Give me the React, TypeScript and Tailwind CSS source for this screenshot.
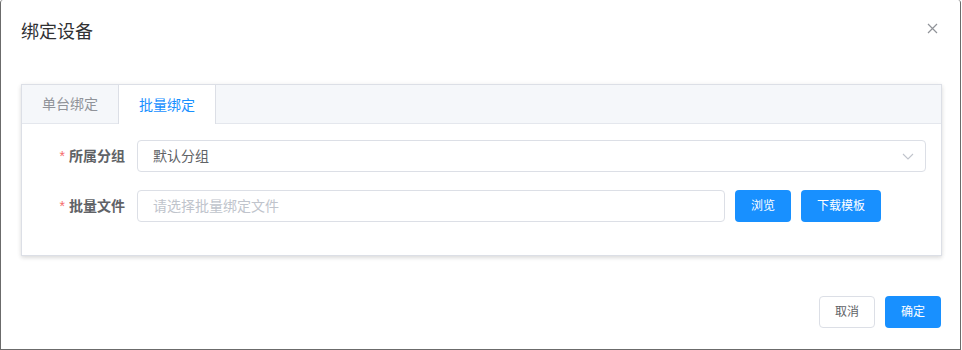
import { useState } from "react"

const FONT = "font-['Helvetica_Neue','Liberation_Sans','Noto_Sans_CJK_SC',sans-serif]"

const TABS = ["单台绑定", "批量绑定"]

export default function App() {
    const [tab, setTab] = useState(1)

    return (
        <div className={`relative w-[961px] h-[350px] bg-white border-x border-b border-[#6b6b6b] rounded-t-[3px] flex flex-col ${FONT}`}>
            {/* ── Header ─────────────────────── */}
            <div className="px-[20px] pt-[20px] pb-[10px]">
                <span className="block text-[18px] leading-[24px] text-[#303133]">绑定设备</span>
            </div>
            <button className="absolute top-[23px] right-[22px] text-[#909399]" aria-label="关闭">
                <svg width="11" height="11" viewBox="0 0 11 11" fill="none" stroke="currentColor" strokeWidth="1.2">
                    <path d="M1 1l9 9M10 1l-9 9" />
                </svg>
            </button>

            {/* ── Body ───────────────────────── */}
            <div className="px-[20px] pt-[30px] pb-[30px]">
                <div className="w-[921px] border border-[#dcdfe6] bg-white shadow-[0_2px_4px_rgba(0,0,0,0.12),0_0_6px_rgba(0,0,0,0.04)]">
                    {/* Tabs */}
                    <div className="flex h-[39px] bg-[#f5f7fa]">
                        {TABS.map((t, i) => (
                            <button
                                key={t}
                                onClick={() => setTab(i)}
                                className={`px-5 text-[14px] leading-[38px] ${
                                    tab === i
                                        ? "bg-white text-[#1890ff] border-x border-[#dcdfe6]"
                                        : "text-[#909399] border-b border-[#e4e7ed]"
                                }`}
                            >
                                {t}
                            </button>
                        ))}
                        <div className="flex-1 border-b border-[#e4e7ed]" />
                    </div>

                    {/* Form */}
                    <div className="px-[15px] pt-[16px] pb-[15px]">
                        <div className="flex items-center mb-[18px]">
                            <label className="w-[100px] pr-3 text-right text-[14px] font-bold text-[#606266]">
                                <span className="text-[#f56c6c] mr-1 font-normal">*</span>所属分组
                            </label>
                            <div className="flex-1 h-[32px] border border-[#dcdfe6] rounded-[4px] flex items-center pl-[15px] pr-[11px]">
                                <span className="flex-1 text-[14px] text-[#606266]">默认分组</span>
                                <svg width="12" height="7" viewBox="0 0 12 7" fill="none" stroke="#c0c4cc" strokeWidth="1.1">
                                    <path d="M1 1l5 5 5-5" />
                                </svg>
                            </div>
                        </div>

                        <div className="flex items-center mb-[18px]">
                            <label className="w-[100px] pr-3 text-right text-[14px] font-bold text-[#606266]">
                                <span className="text-[#f56c6c] mr-1 font-normal">*</span>批量文件
                            </label>
                            <div className="w-[588px] h-[32px] border border-[#dcdfe6] rounded-[4px] flex items-center pl-[15px]">
                                <span className="text-[14px] text-[#c0c4cc]">请选择批量绑定文件</span>
                            </div>
                            <button className="ml-[10px] h-[32px] px-4 rounded-[4px] bg-[#1890ff] text-white text-[12px]">浏览</button>
                            <button className="ml-[10px] h-[32px] px-4 rounded-[4px] bg-[#1890ff] text-white text-[12px]">下载模板</button>
                        </div>
                    </div>
                </div>
            </div>

            {/* ── Footer ─────────────────────── */}
            <div className="flex justify-end gap-[10px] px-[19px] pt-[10px] pb-[21px]">
                <button className="h-[32px] w-[56px] rounded-[4px] border border-[#dcdfe6] bg-white text-[12px] text-[#606266]">取消</button>
                <button className="h-[32px] w-[56px] rounded-[4px] bg-[#1890ff] text-[12px] text-white">确定</button>
            </div>
        </div>
    )
}
